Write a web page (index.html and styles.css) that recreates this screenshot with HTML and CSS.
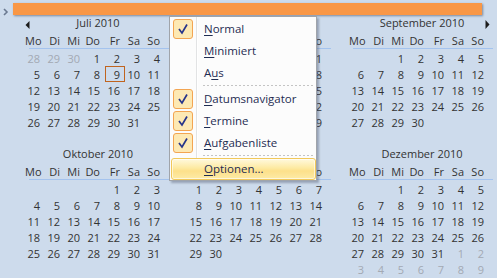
FILE: index.html
```html
<!DOCTYPE html>
<html lang="de">
<head>
<meta charset="utf-8">
<title>Kalender</title>
<link rel="stylesheet" href="styles.css">
</head>
<body>
<div class="topbar">
  <svg class="chev" width="6" height="8" viewBox="0 0 6 8"><polyline points="1,1 4,4 1,7" fill="none" stroke="#6a7990" stroke-width="1.6"/></svg>
  <div class="orange"></div>
</div>

<div class="cal">
  <!-- Juli -->
  <div class="month">
    <div class="mhead"><svg class="arr left" width="5" height="8" viewBox="0 0 5 8"><polygon points="4.5,0 4.5,8 0.5,4" fill="#1c1c1c"/></svg>Juli 2010</div>
    <div class="days"><span>Mo</span><span>Di</span><span>Mi</span><span>Do</span><span>Fr</span><span>Sa</span><span>So</span></div>
    <div class="rule"></div>
    <div class="dates">
      <span class="o">28</span><span class="o">29</span><span class="o">30</span><span>1</span><span>2</span><span>3</span><span>4</span>
      <span>5</span><span>6</span><span>7</span><span>8</span><span class="today">9</span><span>10</span><span>11</span>
      <span>12</span><span>13</span><span>14</span><span>15</span><span>16</span><span>17</span><span>18</span>
      <span>19</span><span>20</span><span>21</span><span>22</span><span>23</span><span>24</span><span>25</span>
      <span>26</span><span>27</span><span>28</span><span>29</span><span>30</span><span>31</span><span></span>
    </div>
  </div>
  <!-- August -->
  <div class="month">
    <div class="mhead">August 2010</div>
    <div class="days"><span>Mo</span><span>Di</span><span>Mi</span><span>Do</span><span>Fr</span><span>Sa</span><span>So</span></div>
    <div class="rule"></div>
    <div class="dates">
      <span></span><span></span><span></span><span></span><span></span><span></span><span>1</span>
      <span>2</span><span>3</span><span>4</span><span>5</span><span>6</span><span>7</span><span>8</span>
      <span>9</span><span>10</span><span>11</span><span>12</span><span>13</span><span>14</span><span>15</span>
      <span>16</span><span>17</span><span>18</span><span>19</span><span>20</span><span>21</span><span>22</span>
      <span>23</span><span>24</span><span>25</span><span>26</span><span>27</span><span>28</span><span>29</span>
      <span>30</span><span>31</span>
    </div>
  </div>
  <!-- September -->
  <div class="month">
    <div class="mhead">September 2010<svg class="arr right" width="5" height="9" viewBox="0 0 5 9"><polygon points="0.5,0 0.5,9 4.5,4.5" fill="#1c1c1c"/></svg></div>
    <div class="days"><span>Mo</span><span>Di</span><span>Mi</span><span>Do</span><span>Fr</span><span>Sa</span><span>So</span></div>
    <div class="rule"></div>
    <div class="dates">
      <span></span><span></span><span>1</span><span>2</span><span>3</span><span>4</span><span>5</span>
      <span>6</span><span>7</span><span>8</span><span>9</span><span>10</span><span>11</span><span>12</span>
      <span>13</span><span>14</span><span>15</span><span>16</span><span>17</span><span>18</span><span>19</span>
      <span>20</span><span>21</span><span>22</span><span>23</span><span>24</span><span>25</span><span>26</span>
      <span>27</span><span>28</span><span>29</span><span>30</span>
    </div>
  </div>
  <!-- Oktober -->
  <div class="month">
    <div class="mhead">Oktober 2010</div>
    <div class="days"><span>Mo</span><span>Di</span><span>Mi</span><span>Do</span><span>Fr</span><span>Sa</span><span>So</span></div>
    <div class="rule"></div>
    <div class="dates">
      <span></span><span></span><span></span><span></span><span>1</span><span>2</span><span>3</span>
      <span>4</span><span>5</span><span>6</span><span>7</span><span>8</span><span>9</span><span>10</span>
      <span>11</span><span>12</span><span>13</span><span>14</span><span>15</span><span>16</span><span>17</span>
      <span>18</span><span>19</span><span>20</span><span>21</span><span>22</span><span>23</span><span>24</span>
      <span>25</span><span>26</span><span>27</span><span>28</span><span>29</span><span>30</span><span>31</span>
    </div>
  </div>
  <!-- November -->
  <div class="month">
    <div class="mhead">November 2010</div>
    <div class="days"><span>Mo</span><span>Di</span><span>Mi</span><span>Do</span><span>Fr</span><span>Sa</span><span>So</span></div>
    <div class="rule"></div>
    <div class="dates">
      <span>1</span><span>2</span><span>3</span><span>4</span><span>5</span><span>6</span><span>7</span>
      <span>8</span><span>9</span><span>10</span><span>11</span><span>12</span><span>13</span><span>14</span>
      <span>15</span><span>16</span><span>17</span><span>18</span><span>19</span><span>20</span><span>21</span>
      <span>22</span><span>23</span><span>24</span><span>25</span><span>26</span><span>27</span><span>28</span>
      <span>29</span><span>30</span>
    </div>
  </div>
  <!-- Dezember -->
  <div class="month">
    <div class="mhead">Dezember 2010</div>
    <div class="days"><span>Mo</span><span>Di</span><span>Mi</span><span>Do</span><span>Fr</span><span>Sa</span><span>So</span></div>
    <div class="rule"></div>
    <div class="dates">
      <span></span><span></span><span>1</span><span>2</span><span>3</span><span>4</span><span>5</span>
      <span>6</span><span>7</span><span>8</span><span>9</span><span>10</span><span>11</span><span>12</span>
      <span>13</span><span>14</span><span>15</span><span>16</span><span>17</span><span>18</span><span>19</span>
      <span>20</span><span>21</span><span>22</span><span>23</span><span>24</span><span>25</span><span>26</span>
      <span>27</span><span>28</span><span>29</span><span>30</span><span>31</span><span class="o">1</span><span class="o">2</span>
      <span class="o">3</span><span class="o">4</span><span class="o">5</span><span class="o">6</span><span class="o">7</span><span class="o">8</span><span class="o">9</span>
    </div>
  </div>
</div>

<div class="menu">
  <div class="item"><span class="chk"><svg width="12" height="12" viewBox="0 0 12 12"><polyline points="2,6 5,10 10,1.5" fill="none" stroke="#27358a" stroke-width="1.7"/></svg></span><span class="lbl"><u>N</u>ormal</span></div>
  <div class="item"><span class="nochk"></span><span class="lbl"><u>M</u>inimiert</span></div>
  <div class="item"><span class="nochk"></span><span class="lbl">A<u>u</u>s</span></div>
  <div class="sep"></div>
  <div class="item"><span class="chk"><svg width="12" height="12" viewBox="0 0 12 12"><polyline points="2,6 5,10 10,1.5" fill="none" stroke="#27358a" stroke-width="1.7"/></svg></span><span class="lbl"><u>D</u>atumsnavigator</span></div>
  <div class="item"><span class="chk"><svg width="12" height="12" viewBox="0 0 12 12"><polyline points="2,6 5,10 10,1.5" fill="none" stroke="#27358a" stroke-width="1.7"/></svg></span><span class="lbl"><u>T</u>ermine</span></div>
  <div class="item"><span class="chk"><svg width="12" height="12" viewBox="0 0 12 12"><polyline points="2,6 5,10 10,1.5" fill="none" stroke="#27358a" stroke-width="1.7"/></svg></span><span class="lbl"><u>A</u>ufgabenliste</span></div>
  <div class="sep"></div>
  <div class="item hot"><span class="nochk"></span><span class="lbl"><u>O</u>ptionen...</span></div>
</div>
</body>
</html>
```

FILE: styles.css
```css
html, body {
  margin: 0;
  padding: 0;
}
body {
  width: 497px;
  height: 278px;
  overflow: hidden;
  background: #cddbec;
  font-family: "Open Sans", "Noto Sans", sans-serif;
  font-size: 11px;
  color: #333333;
  position: relative;
}

.topbar {
  display: flex;
  align-items: flex-start;
  height: 15px;
  padding-top: 3px;
  box-sizing: border-box;
}
.chev {
  margin: 5px 0 0 3px;
  flex: none;
}
.orange {
  margin-left: 4px;
  width: 469px;
  height: 12px;
  background: #f99746;
  box-shadow: 1px 1px 2px rgba(60, 70, 90, 0.55);
}

.cal {
  display: grid;
  grid-template-columns: repeat(3, 140px);
  column-gap: 22px;
  padding-left: 25px;
}
.month {
  width: 140px;
}
.mhead {
  position: relative;
  height: 18px;
  line-height: 16px;
  text-align: center;
  padding-left: 6px;
  box-sizing: border-box;
  color: #333333;
  white-space: nowrap;
}
.arr {
  position: absolute;
  top: 6px;
}
.arr.left { left: 0; }
.arr.right { right: -1px; top: 5px; }

.days {
  display: grid;
  grid-template-columns: repeat(7, 20px);
  height: 15px;
  line-height: 15px;
}
.days span, .dates span {
  text-align: right;
  padding-right: 5px;
  white-space: nowrap;
}
.rule {
  margin-left: 4px;
  width: 140px;
  height: 1px;
  background: #a4c3ee;
  margin-bottom: 1px;
}
.dates {
  display: grid;
  grid-template-columns: repeat(7, 20px);
  grid-template-rows: repeat(6, 16px);
  line-height: 15px;
}
.dates span {
  padding-top: 1px;
  box-sizing: border-box;
}
.dates .o {
  color: #a3a9b3;
}
.dates .today {
  border: 1px solid #c0641f;
  padding-right: 4px;
  padding-top: 0;
}

.menu {
  position: absolute;
  left: 169px;
  top: 16px;
  width: 148px;
  height: 165px;
  box-sizing: border-box;
  border: 1px solid #a0a4aa;
  background: #fcfcfc;
  padding-top: 1px;
  box-shadow: 2px 2px 2px rgba(70, 80, 100, 0.4);
  color: #1f2c52;
}
.menu::before {
  content: "";
  position: absolute;
  left: 26px;
  top: 0;
  bottom: 0;
  width: 1px;
  background: #e2e3e4;
  border-right: 1px solid #ffffff;
}
.item {
  position: relative;
  display: flex;
  align-items: center;
  height: 22px;
  line-height: 22px;
}
.chk, .nochk {
  flex: none;
  width: 20px;
  height: 20px;
  margin-left: 3px;
  margin-right: 11px;
  box-sizing: border-box;
}
.chk {
  border: 1px solid #f3a552;
  border-radius: 3px;
  background: #fde9b4;
  display: flex;
  align-items: center;
  justify-content: center;
}
.lbl {
  font-size: 11.5px;
}
.lbl u {
  text-underline-offset: 2px;
}
.sep {
  height: 4px;
  margin: 0 3px 0 33px;
  box-sizing: border-box;
  padding-top: 1px;
}
.sep::after {
  content: "";
  display: block;
  height: 1px;
  background: repeating-linear-gradient(to right, #c4c4c4 0 2px, transparent 2px 4px);
}
.item.hot::before {
  content: "";
  position: absolute;
  left: 1px;
  top: 0;
  width: 145px;
  height: 22px;
  box-sizing: border-box;
  border: 1px solid #f1c85a;
  border-radius: 3px;
  background: linear-gradient(#fff9de, #fdeaa2 45%, #fde08a 60%, #fdeba6);
  box-shadow: inset 0 0 0 1px rgba(255, 255, 255, 0.6);
}
.item.hot > * {
  position: relative;
}
```
